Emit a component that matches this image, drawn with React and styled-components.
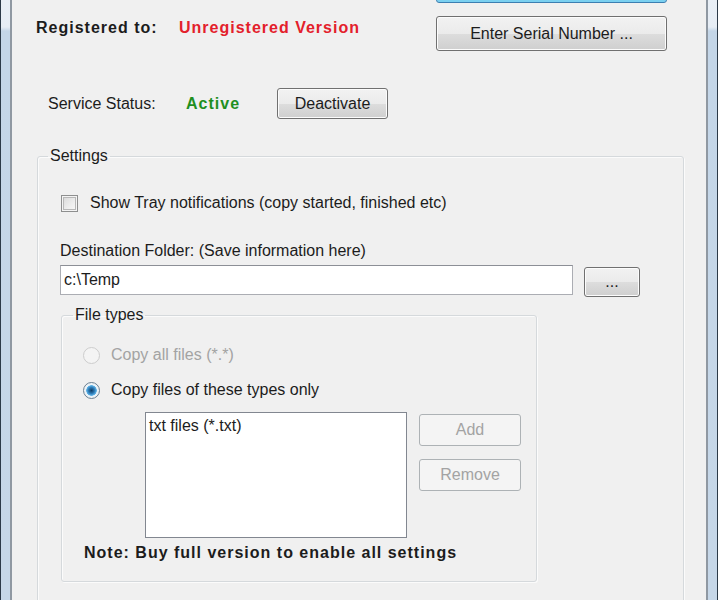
import styled, { createGlobalStyle, css } from "styled-components";

const GlobalStyle = createGlobalStyle`
  html, body {
    margin: 0;
    padding: 0;
    background: #f0f0f0;
  }
  body {
    font-family: "Liberation Sans", Arial, sans-serif;
    font-size: 16px;
    color: #1c1c1c;
  }
`;

const Window = styled.div`
  height: 600px;
  overflow: hidden;
  border-left: 1px solid #2c3a48;
  border-right: 1px solid #2c3a48;
  padding: 0 9px;
  background: linear-gradient(
    to bottom,
    #e9eff6 0,
    #e6edf5 27px,
    #c4d6e8 31px,
    #c6d7e8 100%
  );
`;

const Client = styled.div`
  height: 600px;
  display: flex;
  flex-direction: column;
  box-sizing: border-box;
  background: #f0f0f0;
  border-left: 2px solid #8f98a2;
  border-right: 2px solid #8f98a2;
  padding: 0 39px 0 24px;
`;

const Header = styled.div`
  display: flex;
  justify-content: space-between;
  align-items: flex-start;
  margin-top: -32px;
`;

const RegLine = styled.div`
  display: flex;
  align-items: center;
  height: 20px;
  margin-top: 50px;
  font-weight: bold;
  letter-spacing: 1px;
`;

const RegLabel = styled.span`
  width: 143px;
`;

const Highlight = styled.span`
  font-weight: bold;
  letter-spacing: 1px;
  color: ${(p) => p.$color};
`;

const ButtonStack = styled.div`
  display: flex;
  flex-direction: column;
  gap: 13px;
  width: 231px;
`;

const Button = styled.button`
  box-sizing: border-box;
  width: ${(p) => p.$w || "100%"};
  height: ${(p) => p.$h || "35px"};
  margin: 0;
  padding: 0;
  font-family: inherit;
  font-size: 16px;
  color: #1c1c1c;
  border: 1px solid #707070;
  border-radius: 3px;
  box-shadow: inset 0 0 0 1px #fcfcfc;
  background: linear-gradient(
    to bottom,
    #f2f2f2 0%,
    #ebebeb 50%,
    #dddddd 51%,
    #cfcfcf 100%
  );

  ${(p) =>
    p.$default &&
    css`
      border-color: #3c7fb1;
      box-shadow: inset 0 0 0 2px #7ad0f0;
      background: linear-gradient(to bottom, #eaf6fd 0%, #d9f0fc 50%, #bee6fd 51%, #a7d9f5 100%);
    `}

  ${(p) =>
    p.disabled &&
    css`
      color: #a3a3a3;
      border-color: #adb2b5;
      box-shadow: none;
      background: #f4f4f4;
    `}
`;

const StatusRow = styled.div`
  display: flex;
  align-items: center;
  height: 31px;
  margin-top: 37px;
  padding-left: 12px;
`;

const StatusLabel = styled.span`
  width: 138px;
`;

const StatusValue = styled(Highlight)`
  width: 91px;
`;

const GroupBox = styled.fieldset`
  box-sizing: border-box;
  margin: ${(p) => p.$margin || "0"};
  padding: 0;
  width: ${(p) => p.$w || "auto"};
  min-width: 0;
  border: 1px solid #d5d9dc;
  border-radius: 3px;
  box-shadow: inset 1px 1px 0 #fbfbfb, 1px 1px 0 #fbfbfb;
`;

const Legend = styled.legend`
  margin-left: ${(p) => p.$offset};
  padding: 0 2px;
  height: 20px;
  line-height: 20px;
`;

const SettingsBody = styled.div`
  padding: 27px 0 40px 23px;
`;

const CheckRow = styled.label`
  display: flex;
  align-items: center;
  height: 20px;
  gap: 12px;
`;

const CheckBox = styled.span`
  box-sizing: border-box;
  width: 17px;
  height: 17px;
  border: 1px solid #8e8f8f;
  box-shadow: inset 0 0 0 1px #f4f4f4, inset 0 0 0 2px #b8b8b8;
  background: linear-gradient(135deg, #d6d6d6 0%, #eeeeee 60%, #fafafa 100%);
`;

const FieldLabel = styled.div`
  margin-top: 28px;
  height: 20px;
  line-height: 20px;
  margin-left: -1px;
`;

const FolderRow = styled.div`
  display: flex;
  align-items: flex-start;
  gap: 11px;
  margin-top: 4px;
  margin-left: -1px;
`;

const TextInput = styled.div`
  box-sizing: border-box;
  width: 513px;
  height: 30px;
  padding-left: 3px;
  line-height: 28px;
  background: #ffffff;
  border: 1px solid #abadb3;
  border-top-color: #8c8f96;
`;

const BrowseButton = styled(Button)`
  margin-top: 2px;
  line-height: 20px;
`;

const FileTypesBody = styled.div`
  padding: 20px 0 18px 21px;
`;

const RadioRow = styled.label`
  display: flex;
  align-items: center;
  gap: 11px;
  height: 20px;
  margin-top: ${(p) => p.$mt || "0"};
  color: ${(p) => (p.$disabled ? "#a3a3a3" : "#1c1c1c")};
`;

const Radio = styled.span`
  box-sizing: border-box;
  width: 17px;
  height: 17px;
  border-radius: 50%;
  border: 1px solid ${(p) => (p.$disabled ? "#cdcdcd" : "#6b7f90")};
  background: ${(p) =>
    p.$checked
      ? "radial-gradient(circle, #0e3b63 0, #2b79b4 3px, #5fb2e6 5px, #e9f2f8 5.5px, #f6f6f6 100%)"
      : p.$disabled
      ? "#f4f4f4"
      : "linear-gradient(135deg, #d6d6d6, #fafafa)"};
`;

const ListArea = styled.div`
  display: flex;
  align-items: flex-start;
  gap: 12px;
  margin: 12px 0 0 62px;
`;

const ListBox = styled.div`
  box-sizing: border-box;
  width: 262px;
  height: 126px;
  padding: 4px 3px;
  background: #ffffff;
  border: 1px solid #828790;
`;

const SideButtons = styled.div`
  display: flex;
  flex-direction: column;
  gap: 13px;
  margin-top: 2px;
`;

const Note = styled.div`
  margin: 5px 0 0 1px;
  height: 20px;
  line-height: 20px;
  font-weight: bold;
  letter-spacing: 1px;
`;

export default function App() {
  return (
    <>
      <GlobalStyle />
      <Window>
        <Client>
          <Header>
            <RegLine>
              <RegLabel>Registered to:</RegLabel>
              <Highlight $color="#e3202b">Unregistered Version</Highlight>
            </RegLine>
            <ButtonStack>
              <Button $default aria-label="Buy" />
              <Button>Enter Serial Number ...</Button>
            </ButtonStack>
          </Header>

          <StatusRow>
            <StatusLabel>Service Status:</StatusLabel>
            <StatusValue $color="#1f8f1f">Active</StatusValue>
            <Button $w="111px" $h="31px">
              Deactivate
            </Button>
          </StatusRow>

          <GroupBox $margin="27px -17px 0 1px">
            <Legend $offset="10px">Settings</Legend>
            <SettingsBody>
              <CheckRow>
                <CheckBox />
                Show Tray notifications (copy started, finished etc)
              </CheckRow>

              <FieldLabel>Destination Folder: (Save information here)</FieldLabel>
              <FolderRow>
                <TextInput>c:\Temp</TextInput>
                <BrowseButton $w="56px" $h="30px">
                  ...
                </BrowseButton>
              </FolderRow>

              <GroupBox $w="476px" $margin="8px 0 0 0">
                <Legend $offset="11px">File types</Legend>
                <FileTypesBody>
                  <RadioRow $disabled>
                    <Radio $disabled />
                    Copy all files (*.*)
                  </RadioRow>
                  <RadioRow $mt="15px">
                    <Radio $checked />
                    Copy files of these types only
                  </RadioRow>
                  <ListArea>
                    <ListBox>txt files (*.txt)</ListBox>
                    <SideButtons>
                      <Button $w="102px" $h="32px" disabled>
                        Add
                      </Button>
                      <Button $w="102px" $h="32px" disabled>
                        Remove
                      </Button>
                    </SideButtons>
                  </ListArea>
                  <Note>Note: Buy full version to enable all settings</Note>
                </FileTypesBody>
              </GroupBox>
            </SettingsBody>
          </GroupBox>
        </Client>
      </Window>
    </>
  );
}
